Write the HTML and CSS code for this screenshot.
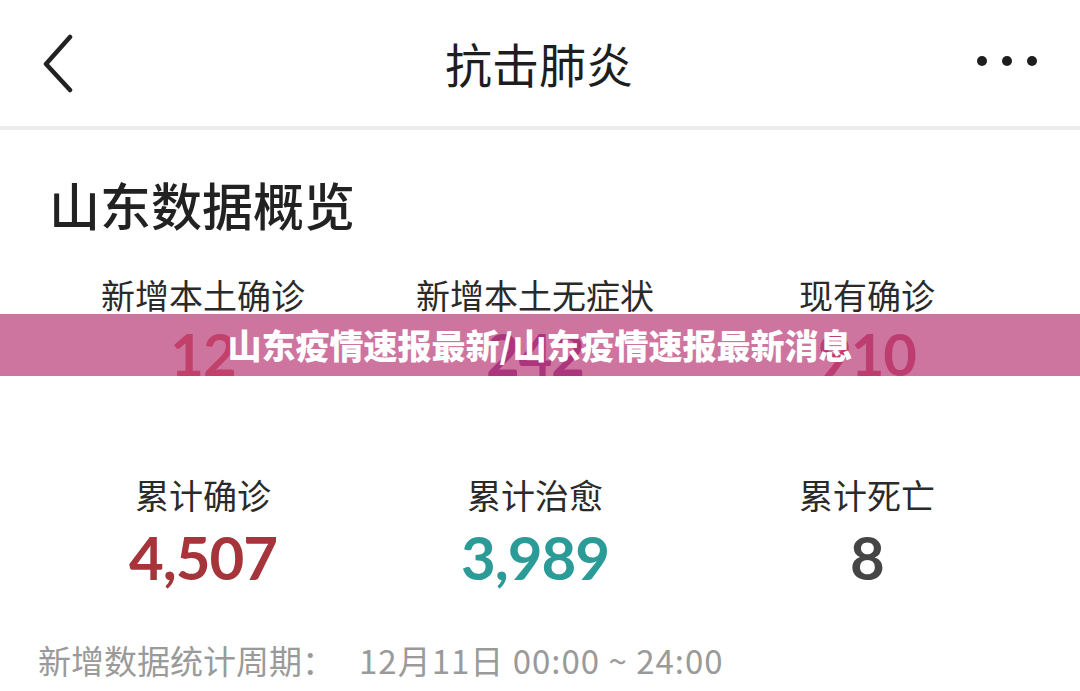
FILE: index.html
```html
<!DOCTYPE html>
<html lang="zh-CN">
<head>
    <meta charset="UTF-8">
    <meta name="viewport" content="width=device-width, initial-scale=1.0">
    <title>抗击肺炎</title>
    <link rel="stylesheet" href="styles.css">
</head>
<body>
    <header class="topbar">
        <a class="back" href="#">
            <svg width="34" height="60" viewBox="0 0 34 60">
                <path d="M29 4 L5 31 L29 57" fill="none" stroke="#222" stroke-width="4.5" stroke-linecap="round" stroke-linejoin="round"/>
            </svg>
        </a>
        <h1 class="title">抗击肺炎</h1>
        <div class="more">
            <span></span><span></span><span></span>
        </div>
    </header>

    <main class="content">
        <h2 class="section-title">山东数据概览</h2>

        <div class="stats">
            <div class="stat">
                <p class="label">新增本土确诊</p>
                <p class="num num-orange">12</p>
            </div>
            <div class="stat">
                <p class="label">新增本土无症状</p>
                <p class="num num-purple">242</p>
            </div>
            <div class="stat">
                <p class="label">现有确诊</p>
                <p class="num num-rose">910</p>
            </div>
        </div>

        <div class="stats stats-total">
            <div class="stat">
                <p class="label">累计确诊</p>
                <p class="num big num-red">4,507</p>
            </div>
            <div class="stat">
                <p class="label">累计治愈</p>
                <p class="num big num-teal">3,989</p>
            </div>
            <div class="stat">
                <p class="label">累计死亡</p>
                <p class="num big num-gray">8</p>
            </div>
        </div>

        <p class="period">新增数据统计周期：<span class="period-time">12月11日 00:00 ~ 24:00</span></p>
    </main>

    <!-- 标题横幅，盖在数据上方 -->
    <div class="banner">山东疫情速报最新/山东疫情速报最新消息</div>
</body>
</html>
```

FILE: styles.css
```css
/* styles.css */
body {
    margin: 0;
    padding: 0;
    background-color: #fff;
    font-family: "Noto Sans CJK SC", "Noto Sans", sans-serif;
    color: #222;
    position: relative;
    overflow: hidden;
}

p {
    margin: 0;
}

.topbar {
    height: 126px;
    border-bottom: 4px solid #ececec;
    display: flex;
    align-items: center;
    justify-content: space-between;
    padding: 0 43px 0 41px;
}

.back {
    display: flex;
    width: 60px;
}

.title {
    margin: 0;
    font-size: 47px;
    font-weight: 400;
    color: #1e1e1e;
    line-height: 60px;
}

.more {
    width: 60px;
    display: flex;
    justify-content: space-between;
    padding-bottom: 4px;
}

.more span {
    width: 10px;
    height: 10px;
    border-radius: 50%;
    background-color: #1e1e1e;
}

.content {
    padding: 0 47px 0 37px;
}

.section-title {
    margin: 44px 0 0 12px;
    font-size: 51px;
    font-weight: 500;
    line-height: 60px;
    color: #222;
}

.stats {
    display: grid;
    grid-template-columns: repeat(3, 1fr);
    margin-top: 41px;
}

.stats-total {
    margin-top: 89px;
}

.stat {
    text-align: center;
}

.label {
    font-size: 34px;
    line-height: 40px;
    color: #2a2a2a;
}

.num {
    margin-top: 7px;
    font-family: "Lato", "Noto Sans", sans-serif;
    font-size: 58px;
    font-weight: 700;
    line-height: 64px;
    letter-spacing: -1px;
}

.num.big {
    font-size: 60px;
    line-height: 70px;
}

.num-orange { color: #d64a42; }
.num-purple { color: #8a2386; }
.num-rose { color: #c63c58; }
.num-red { color: #a5353a; }
.num-teal { color: #2a9b96; }
.num-gray { color: #454545; }

.period {
    margin: 48px 0 0 1px;
    font-size: 33px;
    line-height: 40px;
    color: #9a9a9a;
}

.period-time {
    margin-left: 24px;
    letter-spacing: 1px;
}

.banner {
    position: absolute;
    top: 314px;
    left: 0;
    right: 0;
    height: 62px;
    line-height: 62px;
    text-align: center;
    background-color: rgba(186, 62, 122, 0.72);
    color: #fff;
    font-size: 34px;
    font-weight: 900;
}
```
